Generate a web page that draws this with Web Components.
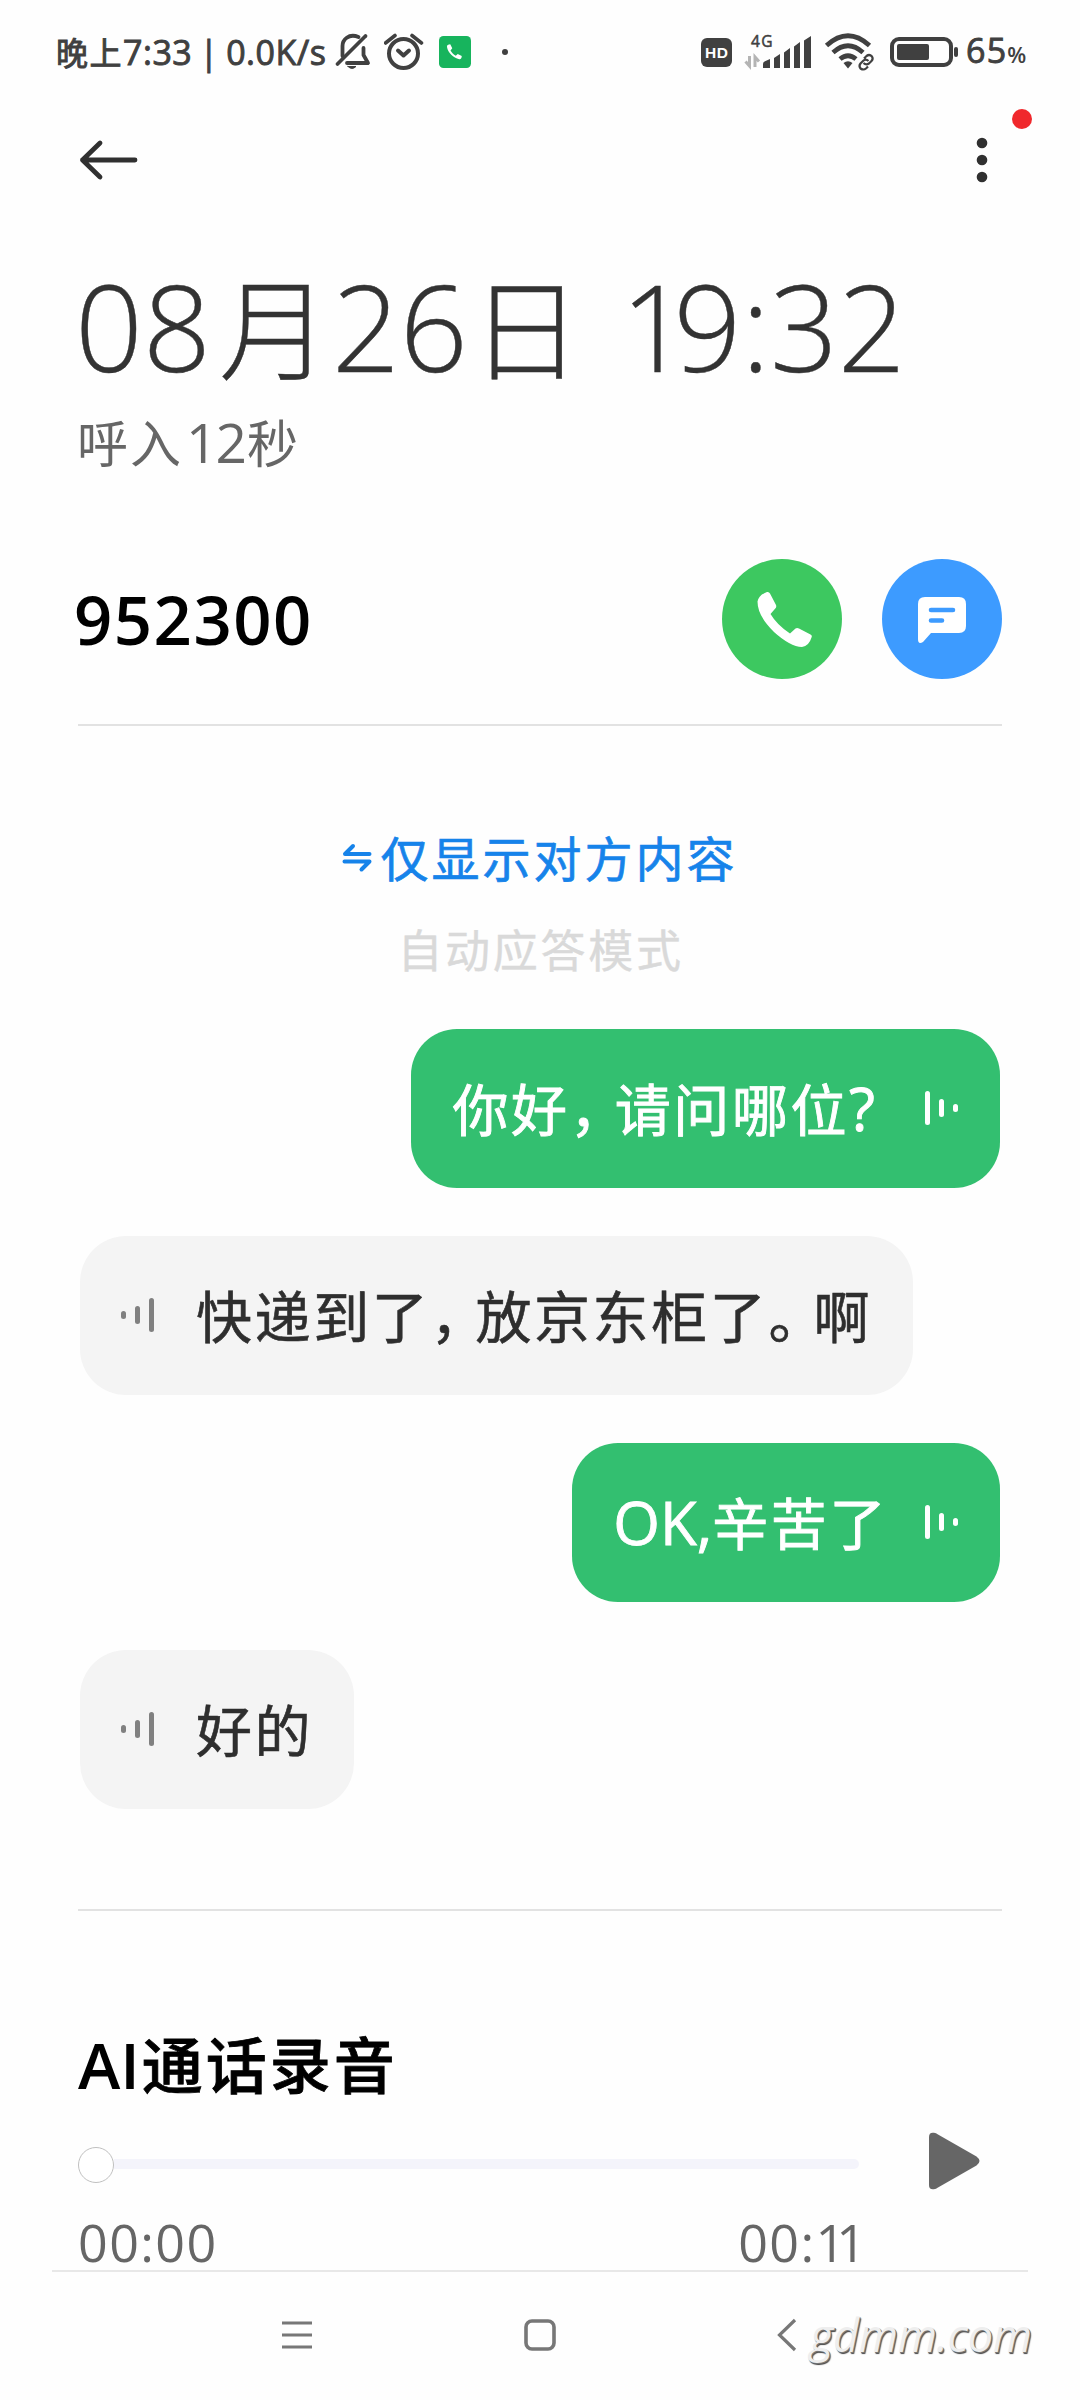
<!DOCTYPE html>
<html lang="zh-CN">
<head>
<meta charset="utf-8">
<title>通话录音</title>
<style>
body{margin:0;background:#fefefe;font-family:"Open Sans","Noto Sans CJK SC",sans-serif}
</style>
</head>
<body>
<call-page></call-page>
<script>
const define = (name, css, html) => {
  const t = document.createElement('template');
  t.innerHTML = `<style>*{box-sizing:border-box}svg{display:block;flex:none}${css}</style>${html}`;
  customElements.define(name, class extends HTMLElement {
    constructor() {
      super();
      this.attachShadow({ mode: 'open' }).append(t.content.cloneNode(true));
    }
  });
};

define('status-bar', `
:host{display:flex;height:104px;padding:0 47px 0 56px;align-items:center;color:#404040;font-size:34px;line-height:34px;white-space:pre}
.clock{display:flex;align-items:baseline;width:275px;letter-spacing:.5px;-webkit-text-stroke:.9px #404040}
.c{font-size:32px;letter-spacing:1.5px}
.sep{margin:0 -2px}
.right{display:flex;align-items:center;margin-left:auto}
.batt{letter-spacing:1.2px;margin-left:7px;width:67px;display:flex;align-items:baseline;-webkit-text-stroke:.9px #404040}
.batt small{font-size:22px;font-weight:600;letter-spacing:0;-webkit-text-stroke:0}
`, `
<div class="clock"><span class="c">晚上</span><span>7:33</span><span class="sep"> | </span><span>0.0K/s</span></div>
<svg width="40" height="40" viewBox="0 0 40 40" style="margin-left:3px" fill="none" stroke="#404040" stroke-width="3.8" stroke-linecap="round" stroke-linejoin="round"><path d="M24.5 5C14.500 1 8.500 8 8.500 14V24M29.500 16V23L34 31H13" /><path d="M31.500 4L3.500 32"/><path d="M14 34.500H22Q18 38.500 14 34.500Z" fill="#404040" stroke-width="1"/></svg>
<svg width="40" height="40" viewBox="0 0 40 40" style="margin-left:10px" fill="none" stroke="#404040" stroke-width="4"><circle cx="19.500" cy="21.500" r="14.500"/><path d="M1.500 11L11 3.500M28 3.500L37.500 11" stroke-width="3.600" stroke-linecap="round"/><path d="M14 18.500L19.500 23.500L25 18.500" stroke-linecap="round" stroke-linejoin="round"/></svg>
<svg width="32" height="32" viewBox="0 0 32 32" style="margin-left:15px"><rect width="32" height="32" rx="4.500" fill="#17b45d"/><path transform="translate(6.500 6.700) scale(.5)" d="M3 8.500C2 5 6 3.500 9.500 3.200L13.500 11L10 15.500C12.500 20 16 23.500 20.500 26L24.500 22.500L32.500 26.500C32.500 30 31 33.500 27.500 33C15.500 30.500 5 20 3 8.500Z" fill="#fff"/></svg>
<svg width="6" height="6" style="margin-left:31px"><circle cx="3" cy="3" r="3" fill="#404040"/></svg>
<div class="right">
<svg width="31" height="29" viewBox="0 0 31 29"><rect width="31" height="29" rx="6" fill="#404040"/><text x="15.500" y="19.800" text-anchor="middle" font-size="15.500" font-weight="700" font-family="Liberation Sans" fill="#fff" textLength="23">HD</text></svg>
<svg width="69" height="48" viewBox="0 -6 69 48" style="margin-left:12px"><text x="7" y="13" font-size="15.500" font-family="Open Sans" fill="#404040" stroke="#404040" stroke-width=".5" textLength="21.500">4G</text><path d="M5.500 22V32L1.500 27.500M11 33V23L15 27.500" fill="none" stroke="#b4b4b4" stroke-width="3"/><path fill="#404040" d="M19 34V30Q19 28 21 27.300L26 25V34ZM30 34V24L36 20V34ZM40 34V18.500L46 14V34ZM50 34V12.500L56 8V34ZM60 34V6.500L67 2V34Z"/></svg>
<svg width="52" height="40" viewBox="0 0 52 40" style="margin-left:11px" fill="none" stroke="#404040" stroke-width="4.800"><path d="M2.500 13.500Q24 -6 45.500 13.500M9 20.500Q24 7 39 20.500M16 27Q24 20.500 32 27"/><path d="M19.500 31Q24 27.500 28.500 31L24 36.500Z" fill="#404040" stroke="none"/><g stroke="#fefefe" stroke-width="6"><rect x="-5.500" y="-3.400" width="11" height="6.800" rx="3.400" transform="translate(42 31) rotate(-45)"/></g><g stroke-width="2.200"><path d="M40 26.500L42.500 24Q45.500 21.800 48 24.500Q49.500 27 47.500 29L45 31.500Q42 33.500 39.500 31M44.500 29Q42 26.500 39.500 28.500L36.500 31.500Q34.500 34 36.500 36.500Q39.500 38.500 42 36.500L44 34.500"/></g></svg>
<svg width="69" height="32" viewBox="0 0 69 32" style="margin-left:14px"><rect x="2" y="3" width="59" height="26" rx="7" fill="none" stroke="#404040" stroke-width="4"/><rect x="7" y="8" width="32" height="16" rx="2" fill="#404040"/><rect x="64" y="11" width="4" height="10" rx="2" fill="#404040"/></svg>
<div class="batt"><span>65</span><small>%</small></div>
</div>`);

define('app-bar', `
:host{display:flex;height:112px;padding:0 70px 0 78px;align-items:center;justify-content:space-between}
.more{position:relative;display:flex;margin-right:22px}
.badge{position:absolute;left:36px;top:-28px;width:20px;height:20px;border-radius:50%;background:#f0282c}
`, `
<svg width="62" height="44" viewBox="0 0 62 44" fill="none" stroke="#303030" stroke-width="4.800" stroke-linecap="round" stroke-linejoin="round"><path d="M57 22H4.500M22 5L4.500 22L22 39"/></svg>
<div class="more"><svg width="12" height="46" fill="#303030"><circle cx="6" cy="6" r="5.300"/><circle cx="6" cy="23" r="5.300"/><circle cx="6" cy="40" r="5.300"/></svg><span class="badge"></span></div>`);

define('call-heading', `
:host{display:block;height:314px;padding:51px 0 0 75px}
h1{margin:0;font-size:119px;line-height:119px;font-weight:300;color:#333;display:flex;align-items:baseline;white-space:pre;-webkit-text-stroke:.4px #333}
.k{font-size:111px}
h1 .k{margin:0 2px 0 8px}
h1 .k + span + .k{margin:0 8px 0 3px}
.one{letter-spacing:-15px}
p{margin:25px 0 0 2px;font-size:55px;line-height:56px;color:#666;display:flex;align-items:baseline;font-weight:400}
p .k{font-size:51px;letter-spacing:2px}
p .n{margin:0 2px 0 3px;letter-spacing:-2px}
`, `
<h1><span>08</span><span class="k">月</span><span>26</span><span class="k">日</span><span> </span><span><span class="one">1</span>9:32</span></h1>
<p><span class="k">呼入</span><span class="n">12</span><span class="k">秒</span></p>`);

define('contact-row', `
:host{display:flex;height:196px;margin:0 78px;align-items:center;border-bottom:2px solid #e2e2e2;padding-bottom:16px}
.num{font-size:67px;line-height:67px;font-weight:600;color:#000;margin-left:-4px;letter-spacing:1.500px;flex:1}
.b{width:120px;height:120px;border-radius:50%;display:flex;align-items:center;justify-content:center}
.g{background:#3dc860}.m{background:#3d9bff;margin-left:40px}
`, `
<span class="num">952300</span>
<span class="b g"><svg width="60" height="60" viewBox="0 0 60 60"><path fill="#fff" d="M5.500 12.500Q7 6 15 3Q17 2.500 18 4.500L24 16Q24.800 18 23.300 19.500L18.500 25Q25 36 38 44.500L43.500 39.500Q45 38.500 47 39.500L58.500 45.500Q60.500 46.500 59.500 48.500Q57 57 50 58Q38 57.500 22 43Q5.500 27 5.500 12.500Z"/></svg></span>
<span class="b m"><svg width="48" height="48" viewBox="0 0 48 48" style="margin-top:3px"><path fill="#fff" d="M7 0H41Q48 0 48 7V29Q48 36 41 36H13L5 45Q0 48 0 42V7Q0 0 7 0Z"/><path d="M13 13H35M13 23.500H24" stroke="#3d9bff" stroke-width="4.600" stroke-linecap="round"/></svg></span>`);

define('mode-switch', `
:host{display:flex;flex-direction:column;align-items:center;height:303px;padding-top:108px}
.l{display:flex;align-items:center;color:#1683ea;font-size:48px;line-height:50px;letter-spacing:3px;-webkit-text-stroke:.7px #1683ea}
.l svg{margin:-2px 8px 0 0}
.h{color:#d9d9d9;font-size:45px;line-height:46px;letter-spacing:2.700px;margin:44px 0 0 1px;-webkit-text-stroke:.4px #d9d9d9}
`, `
<div class="l"><svg width="30" height="30" viewBox="0 0 30 30" fill="none" stroke="#1683ea" stroke-width="4" stroke-linecap="round" stroke-linejoin="round"><path d="M27.500 11H3L11 3M2.500 18.500H27.500L19.500 26.500"/></svg><span>仅显示对方内容</span></div>
<div class="h">自动应答模式</div>`);

define('voice-bubble', `
:host{display:flex;align-items:center;height:159px;border-radius:46px;padding:0 41px;font-size:56px;line-height:56px;letter-spacing:2.600px;white-space:nowrap;background:#f4f4f4;color:#2e2e2e;align-self:flex-start;-webkit-text-stroke:.6px currentColor}
:host([mine]){flex-direction:row-reverse;align-self:flex-end;background:#33bf70;color:#fff;padding:0 42px 0 41px;-webkit-text-stroke:.9px currentColor}
svg{margin-bottom:2px;color:#808080}
:host([mine]) svg{transform:scaleX(-1);color:#fff}
.t{margin-left:41px}
:host([mine]) .t{margin:0 36px 0 0}
::slotted(.p){letter-spacing:-11px}
::slotted(.q){font-size:60px;letter-spacing:0}
::slotted(.e){padding-right:13px}
`, `<svg width="34" height="36" viewBox="0 0 34 36" fill="currentColor"><rect x="0" y="14" width="5" height="8" rx="2.500"/><rect x="14" y="9" width="5" height="18" rx="2.500"/><rect x="28" y="1" width="5" height="34" rx="2.500"/></svg><span class="t"><slot></slot></span>`);

define('chat-list', `
:host{display:flex;flex-direction:column;gap:48px;height:880px;padding:0 80px}
`, `<slot></slot>`);

define('record-player', `
:host{display:block;height:361px;margin:0 78px;padding-top:122px;border-top:2px solid #e2e2e2}
h2{margin:0;font-size:64px;line-height:64px;font-weight:600;color:#000;display:flex;align-items:baseline}
h2 .k{font-size:61px;letter-spacing:3px;font-weight:500;margin-left:2px;-webkit-text-stroke:.8px #000}
.row{display:flex;height:58px;align-items:center;margin-top:34px}
.track{display:flex;align-items:center;width:781px}
.knob{width:36px;height:36px;border-radius:50%;border:1.500px solid #c0c0c0;background:#fff;margin-top:7px}
.bar{flex:1;height:10px;background:#f4f4fb;border-radius:0 5px 5px 0;margin-top:6px}
.row svg{margin-left:70px}
.time{display:flex;justify-content:space-between;width:783px;margin-top:26px;font-size:52px;line-height:51px;color:#666;letter-spacing:1.400px}
.ones{letter-spacing:-9px;margin-right:4px}
`, `
<h2><span>AI</span><span class="k">通话录音</span></h2>
<div class="row"><div class="track"><span class="knob"></span><span class="bar"></span></div><svg width="51" height="58" viewBox="0 0 51 58"><path fill="#666" d="M0 5Q0 0 5 .8Q7 1 9 2.500L47.500 24.500Q53.500 29 47.500 33.500L9 55.500Q7 57 5 57.200Q0 58 0 53Z"/></svg></div>
<div class="time"><span>00:00</span><span>00:<span class="ones">11</span></span></div>`);

define('nav-bar', `
:host{display:flex;height:131px;margin:0 52px;border-top:2px solid #e8e8e8;padding:0 0 4px 229px;align-items:center}
.wm{font:italic 45px/50px "Open Sans","Noto Sans",sans-serif;color:#eee;text-shadow:1px 1px 0 #777,1.500px 1.500px 1px #444;margin:1px 0 0 13px;letter-spacing:-.3px}
`, `
<svg width="32" height="32" viewBox="0 0 32 32" stroke="#777" stroke-width="3.200"><path d="M1 4H31M1 16H31M1 28H31"/></svg>
<svg width="34" height="34" viewBox="0 0 34 34" style="margin-left:210px"><rect x="3" y="3" width="28" height="28" rx="6" fill="none" stroke="#777" stroke-width="3.600"/></svg>
<svg width="20" height="34" viewBox="0 0 20 34" style="margin-left:220px"><path d="M18 2L2.500 17L18 32" fill="none" stroke="#777" stroke-width="3.200"/></svg>
<span class="wm">gdmm.com</span>`);

define('call-page', `
:host{display:block;width:1080px;height:2400px;overflow:hidden;background:#fefefe}
`, `
<status-bar></status-bar>
<app-bar></app-bar>
<call-heading></call-heading>
<contact-row></contact-row>
<mode-switch></mode-switch>
<chat-list>
<voice-bubble mine>你好<span class="p">，</span>请问哪位<span class="q e">?</span></voice-bubble>
<voice-bubble>快递到了<span class="p">，</span>放京东柜了<span class="p">。</span>啊</voice-bubble>
<voice-bubble mine><span class="q">OK,</span>辛苦了</voice-bubble>
<voice-bubble>好的</voice-bubble>
</chat-list>
<record-player></record-player>
<nav-bar></nav-bar>`);
</script>
</body>
</html>
